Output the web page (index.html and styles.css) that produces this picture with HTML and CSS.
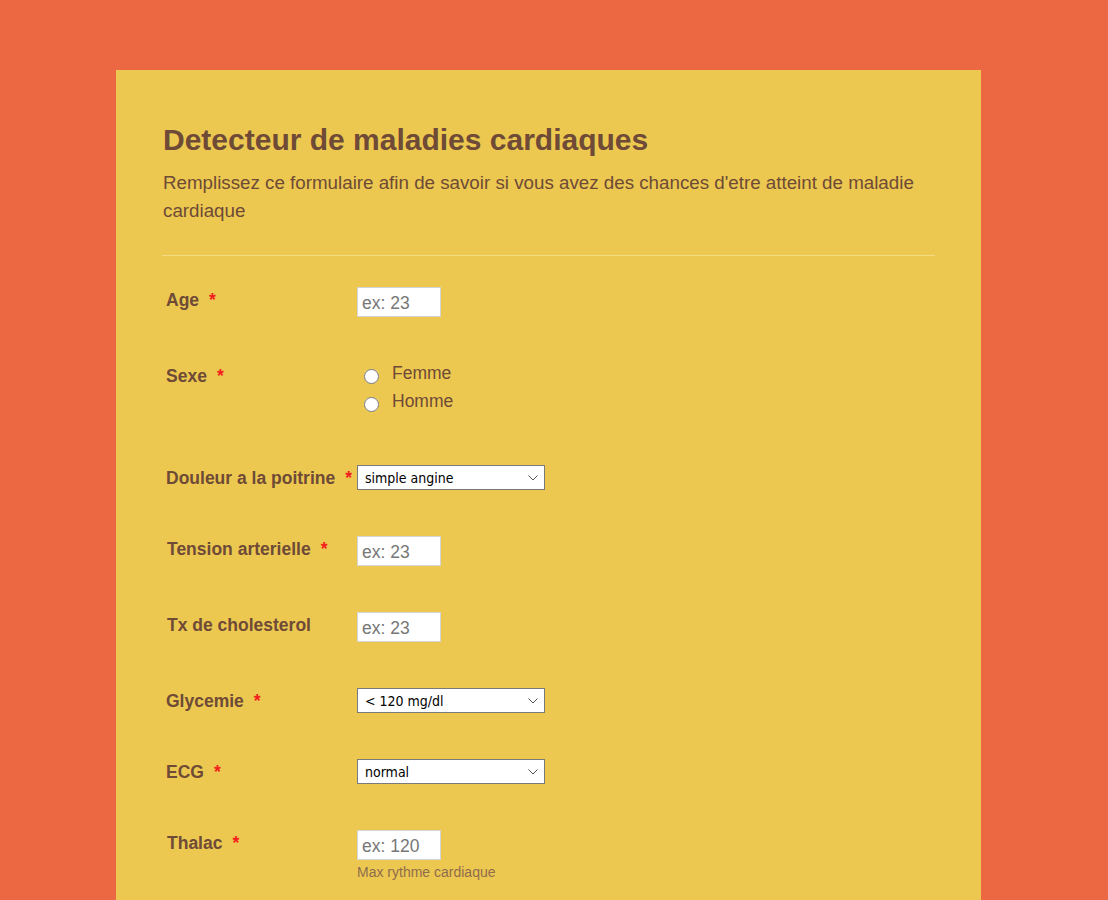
FILE: index.html
```html
<!DOCTYPE html>
<html lang="fr">
<head>
<meta charset="utf-8">
<title>Detecteur de maladies cardiaques</title>
<link rel="stylesheet" href="styles.css">
</head>
<body>
<form class="card">
  <header class="head">
    <h1 class="title">Detecteur de maladies cardiaques</h1>
    <p class="subtitle">Remplissez ce formulaire afin de savoir si vous avez des chances d'etre atteint de maladie cardiaque</p>
  </header>
  <ul class="lines">
    <li class="line">
      <label class="lbl">Age<span class="req">*</span></label>
      <div class="ctrl"><input class="txt" type="text" placeholder="ex: 23"></div>
    </li>
    <li class="line">
      <label class="lbl">Sexe<span class="req">*</span></label>
      <div class="ctrl radios">
        <label class="opt"><input type="radio" name="sexe"><span>Femme</span></label>
        <label class="opt"><input type="radio" name="sexe"><span>Homme</span></label>
      </div>
    </li>
    <li class="line">
      <label class="lbl">Douleur a la poitrine<span class="req">*</span></label>
      <div class="ctrl"><div class="selwrap"><select class="sel"><option>simple angine</option></select><svg class="chev" width="10" height="6" viewBox="0 0 10 6"><path d="M0.5 0.5 L5 5 L9.5 0.5" fill="none" stroke="#555" stroke-width="1"/></svg></div></div>
    </li>
    <li class="line">
      <label class="lbl lbl-t">Tension arterielle<span class="req">*</span></label>
      <div class="ctrl"><input class="txt" type="text" placeholder="ex: 23"></div>
    </li>
    <li class="line">
      <label class="lbl lbl-t">Tx de cholesterol</label>
      <div class="ctrl"><input class="txt" type="text" placeholder="ex: 23"></div>
    </li>
    <li class="line">
      <label class="lbl">Glycemie<span class="req">*</span></label>
      <div class="ctrl"><div class="selwrap"><select class="sel"><option>&lt; 120 mg/dl</option></select><svg class="chev" width="10" height="6" viewBox="0 0 10 6"><path d="M0.5 0.5 L5 5 L9.5 0.5" fill="none" stroke="#555" stroke-width="1"/></svg></div></div>
    </li>
    <li class="line">
      <label class="lbl">ECG<span class="req">*</span></label>
      <div class="ctrl"><div class="selwrap"><select class="sel"><option>normal</option></select><svg class="chev" width="10" height="6" viewBox="0 0 10 6"><path d="M0.5 0.5 L5 5 L9.5 0.5" fill="none" stroke="#555" stroke-width="1"/></svg></div></div>
    </li>
    <li class="line">
      <label class="lbl lbl-t">Thalac<span class="req">*</span></label>
      <div class="ctrl"><input class="txt" type="text" placeholder="ex: 120"><span class="sub">Max rythme cardiaque</span></div>
    </li>
  </ul>
</form>
</body>
</html>
```

FILE: styles.css
```css
html, body {
  margin: 0;
  padding: 0;
  background: #ec6843;
  height: 100%;
  overflow: hidden;
}
body {
  font-family: "Liberation Sans", Arial, sans-serif;
  color: #6e4a37;
}
.card {
  margin: 70px 0 0 116px;
  width: 865px;
  min-height: 900px;
  background: #ecc850;
  padding: 0 46px;
  box-sizing: border-box;
}
.head {
  padding-top: 52px;
  padding-bottom: 30px;
  border-bottom: 1px solid #f3dc84;
}
.title {
  margin: 0 0 0 1px;
  font-size: 30px;
  line-height: 36px;
  font-weight: bold;
  color: #6e4a37;
}
.subtitle {
  margin: 11px 0 0 1px;
  font-size: 18.75px;
  line-height: 28px;
}
.lines {
  list-style: none;
  margin: 0;
  padding: 8px 0 0;
}
.line {
  display: flex;
  padding: 23px 4px;
}
.lbl {
  width: 191px;
  flex: none;
  font-size: 17.5px;
  font-weight: bold;
  line-height: 20px;
  margin-top: 3px;
}
.lbl-t { padding-left: 1px; width: 190px; }
.req {
  color: #f21d1d;
  margin-left: 10px;
}
.ctrl {
  display: flex;
  flex-direction: column;
  align-items: flex-start;
}
.txt {
  width: 84px;
  height: 30px;
  box-sizing: border-box;
  border: 1px solid #d5d5d5;
  background: #fff;
  padding: 2px 4px 0;
  font-family: "Liberation Sans", Arial, sans-serif;
  font-size: 17.5px;
  color: #333;
  outline: none;
}
.txt::placeholder { color: #777; }
.radios { margin: -3px 0 3px; }
.opt {
  display: flex;
  align-items: center;
  height: 28px;
  font-size: 17.5px;
  color: #6e4a37;
}
.opt input {
  width: 15px;
  height: 15px;
  margin: 4px 13px 0 7px;
}
.opt span { position: relative; top: -1px; }
.selwrap {
  position: relative;
  width: 188px;
  height: 25px;
}
.sel {
  appearance: none;
  -webkit-appearance: none;
  width: 188px;
  height: 25px;
  box-sizing: border-box;
  border: 1px solid #7a7a7a;
  border-radius: 0;
  background: #fff;
  padding: 0 0 0 7px;
  font-family: "DejaVu Sans", Tahoma, sans-serif;
  font-stretch: condensed;
  font-size: 14px;
  color: #000;
}
.chev {
  position: absolute;
  right: 7px;
  top: 10px;
  pointer-events: none;
}
.sub {
  margin-top: 4px;
  font-size: 14px;
  color: #8f6c4d;
}
```
